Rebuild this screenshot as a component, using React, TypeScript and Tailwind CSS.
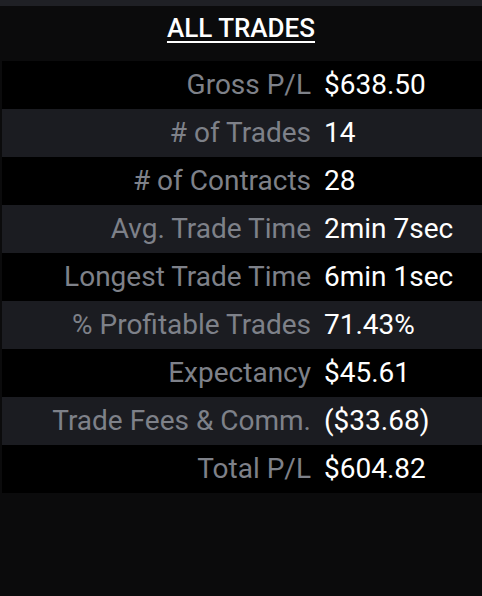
import React from 'react';

const rows: [string, string][] = [
  ['Gross P/L', '$638.50'],
  ['# of Trades', '14'],
  ['# of Contracts', '28'],
  ['Avg. Trade Time', '2min 7sec'],
  ['Longest Trade Time', '6min 1sec'],
  ['% Profitable Trades', '71.43%'],
  ['Expectancy', '$45.61'],
  ['Trade Fees & Comm.', '($33.68)'],
  ['Total P/L', '$604.82'],
];

export default function App() {
  return (
    <div className="w-[482px] h-[596px] bg-[#0b0b0c] flex flex-col" style={{ fontFamily: 'Roboto, "Liberation Sans", sans-serif' }}>
      {/* top strip */}
      <div className="h-[6px] bg-[#1f2025]" />

      <div className="h-[55px] flex items-start justify-center pt-[7px]">
        <span className="text-[26px] leading-[30px] font-medium text-white underline underline-offset-[4px] decoration-2">
          ALL TRADES
        </span>
      </div>

      <div className="ml-[2px] flex flex-col">
        {rows.map(([label, value], i) => (
          <div key={label} className={`h-[48px] flex items-center text-[28px] ${i % 2 === 0 ? 'bg-black' : 'bg-[#1b1c21]'}`}>
            <div className="w-[309px] text-right text-[#7e8189] whitespace-nowrap">{label}</div>
            <div className="pl-[13px] text-white whitespace-nowrap">{value}</div>
          </div>
        ))}
      </div>
    </div>
  );
}
